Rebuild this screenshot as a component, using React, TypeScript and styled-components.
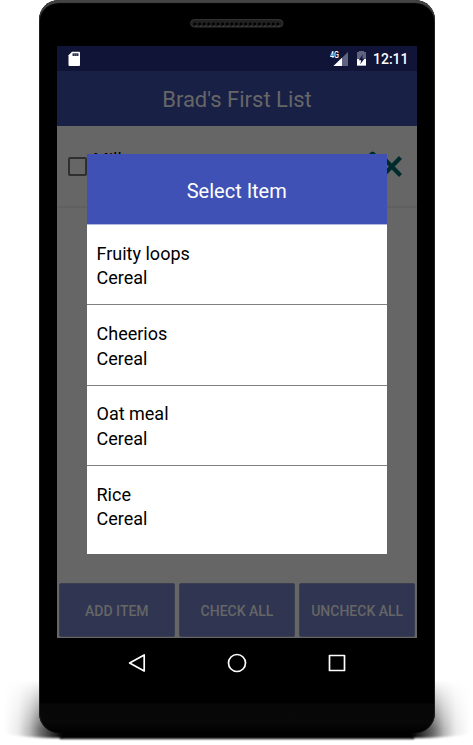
import React from "react";
import styled, { createGlobalStyle } from "styled-components";

const GlobalStyle = createGlobalStyle`
  * { box-sizing: border-box; }
  html, body { margin: 0; background: #fff; overflow: hidden; }
  body { font-family: Roboto, "Liberation Sans", sans-serif; }
`;

const Stage = styled.main`
  position: relative;
  width: 473px;
  height: 745px;
  overflow: hidden;
  padding-left: 38.5px;
`;

const GroundShadow = styled.svg`
  position: absolute;
  left: 0;
  top: 670px;
`;

const Phone = styled.div`
  position: relative;
  width: 396.5px;
  height: 733px;
  padding: 0 18px 0 18.5px;
  display: flex;
  flex-direction: column;
  background: linear-gradient(#000 0 703px, #070707 704px, #080808 722px, #000 733px);
  border-radius: 20px;
  box-shadow: inset 0 3px 1px #444, inset 1px 0 0 #1c1c1c, inset -1px 0 0 #1c1c1c;
`;

const Earpiece = styled.div`
  height: 46px;
  flex: none;
  display: flex;
  justify-content: center;
  padding-top: 19px;
`;

const Screen = styled.section`
  position: relative;
  height: 592px;
  flex: none;
  display: flex;
  flex-direction: column;
  background: #666;
`;

const StatusBar = styled.header`
  height: 25px;
  flex: none;
  display: flex;
  align-items: center;
  background: #101538;
  padding: 0 8px 0 11px;
  color: #fff;
`;

const StatusGroup = styled.div`
  margin-left: auto;
  display: flex;
  align-items: center;
`;

const Clock = styled.time`
  width: 36px;
  padding-top: 1px;
  font-size: 14px;
  font-weight: 500;
  line-height: 24px;
  white-space: nowrap;
`;

const TitleBar = styled.h1`
  height: 55px;
  flex: none;
  margin: 0;
  padding-top: 1px;
  display: flex;
  align-items: center;
  justify-content: center;
  background: #192046;
  color: #666;
  font-size: 22px;
  font-weight: 400;
`;

const ListRow = styled.div`
  height: 82px;
  flex: none;
  display: flex;
  padding: 0 14px 0 11px;
  border-bottom: 2px solid #606060;
`;

const RowName = styled.span`
  font-size: 18px;
  line-height: 20px;
  margin: 24px 0 0 6px;
  color: #000;
`;

const RowIcons = styled.svg`
  margin: 23px 0 0 auto;
`;

const Checkbox = styled.span`
  width: 19px;
  height: 19px;
  margin-top: 31px;
  border: 2px solid #2f2f2f;
  border-radius: 2px;
`;

const ButtonBar = styled.footer`
  margin-top: auto;
  padding: 0 1.5px 1px;
  display: grid;
  grid-template-columns: repeat(3, 1fr);
  gap: 3.5px;
`;

const ActionButton = styled.button`
  height: 54px;
  padding: 1px 0 0;
  border: 1px solid #3b3e50;
  border-radius: 2px;
  background: #303552;
  color: #666;
  font: 500 14px Roboto, "Liberation Sans", sans-serif;
  white-space: nowrap;
`;

const Dialog = styled.section`
  position: absolute;
  left: 29.5px;
  top: 108px;
  width: 300.5px;
  height: 400px;
  background: #fff;
`;

const DialogTitle = styled.h2`
  height: 70px;
  margin: 0;
  padding-top: 3px;
  display: flex;
  align-items: center;
  justify-content: center;
  background: #3f51b5;
  color: #fff;
  font-size: 20px;
  font-weight: 400;
`;

const ChoiceList = styled.ul`
  margin: 0;
  padding: 0;
  border-top: 1px solid #b2b9e1;
  list-style: none;
`;

const Choice = styled.li`
  height: 80.3px;
  padding: 16.9px 10px 0;
  color: #000;
  font-size: 18px;
  line-height: 24.5px;

  &:not(:last-child) { border-bottom: 1px solid #808080; }
`;

const ChoiceLine = styled.div``;

const Navigation = styled.nav`
  height: 49px;
  display: flex;
  align-items: center;
  justify-content: center;
`;

const choices = ["Fruity loops", "Cheerios", "Oat meal", "Rice"];

export default function App() {
  return (
    <>
      <GlobalStyle />
      <Stage>
        <GroundShadow width="473" height="75" viewBox="0 0 473 75">
          <defs>
            <linearGradient id="sideShade">
              <stop stopColor="#000" stopOpacity="0" />
              <stop offset=".25" stopColor="#000" stopOpacity=".08" />
              <stop offset=".45" stopColor="#000" stopOpacity=".28" />
              <stop offset=".62" stopColor="#000" stopOpacity=".56" />
              <stop offset="1" stopColor="#000" />
            </linearGradient>
            <linearGradient id="fade" x2="0" y2="1">
              <stop stopColor="#000" />
              <stop offset=".75" stopColor="#fff" />
              <stop offset="1" stopColor="#fff" />
            </linearGradient>
            <mask id="fadeMask"><rect y="10" width="473" height="65" fill="url(#fade)" /></mask>
            <filter id="soft" x="-20%" y="-50%" width="140%" height="200%"><feGaussianBlur stdDeviation="1.2" /></filter>
          </defs>
          <g mask="url(#fadeMask)" filter="url(#soft)">
            <path d="M4 10H62V68Q22 68 4 63Z" fill="url(#sideShade)" />
            <path d="M4 10H62V68Q22 68 4 63Z" fill="url(#sideShade)" transform="translate(474 0) scale(-1 1)" />
          </g>
          <path d="M60 55H414V69H60Z" fill="#000" filter="url(#soft)" />
        </GroundShadow>
        <Phone>
          <Earpiece>
            <svg width="94" height="9" viewBox="0 0 94 9">
              <rect x=".6" y=".6" width="92.4" height="7.4" rx="3.7" fill="#202020" stroke="#353535" />
              <path d="M5 5H90" stroke="#000" strokeWidth="3" strokeLinecap="round" strokeDasharray="0 4.6" />
              <path d="M5 7H90" stroke="#444" strokeDasharray="2 2.6" />
            </svg>
          </Earpiece>
          <Screen>
            <StatusBar>
              <svg width="13" height="16" viewBox="0 0 13 16">
                <path d="M4 .8H11Q12 .8 12 1.8V14Q12 15 11 15H1.5Q.5 15 .5 14V4.3Z" fill="#fff" />
                <path d="M4.5 2.3H10.5V5H4.5Z" fill="#303650" />
                <path d="M6.5 2V5M8.5 2V5" stroke="#777b90" strokeWidth=".6" />
              </svg>
              <StatusGroup>
                <svg width="43" height="18" viewBox="0 0 43 18">
                  <text x="0" y="8" fill="#fff" fontSize="8.5" fontWeight="500" textLength="9" lengthAdjust="spacingAndGlyphs">4G</text>
                  <path d="M18 2V16H3.5Z" fill="#5f6380" />
                  <path d="M12 7.8V16H3.5Z" fill="#fff" />
                  <path d="M29 2V1H34V2H36V16H27V2Z" fill="#5f6380" />
                  <path d="M27 9H36V15.5H27Z" fill="#fff" />
                  <path d="M32.8 4.5L28.7 10.2H31.2L30.3 14.2L34.6 8.4H32.1Z" fill="#101538" />
                </svg>
                <Clock>12:11</Clock>
              </StatusGroup>
            </StatusBar>
            <TitleBar>Brad's First List</TitleBar>
            <ListRow>
              <Checkbox />
              <RowName>Milk</RowName>
              <RowIcons width="37" height="34" viewBox="0 0 37 34">
                <path d="M1 12L3 5Q6.5 0 10 5V12Z" fill="#002b2d" />
                <path d="M17 8.5L34.5 26.5M34.5 8.5L17 26.5" stroke="#002b2d" strokeWidth="4.2" />
              </RowIcons>
            </ListRow>
            <ButtonBar>
              <ActionButton>ADD ITEM</ActionButton>
              <ActionButton>CHECK ALL</ActionButton>
              <ActionButton>UNCHECK ALL</ActionButton>
            </ButtonBar>
            <Dialog role="dialog" aria-label="Select Item">
              <DialogTitle>Select Item</DialogTitle>
              <ChoiceList>
                {choices.map((name) => (
                  <Choice key={name}>
                    <ChoiceLine>{name}</ChoiceLine>
                    <ChoiceLine>Cereal</ChoiceLine>
                  </Choice>
                ))}
              </ChoiceList>
            </Dialog>
          </Screen>
          <Navigation>
            <svg width="220" height="24" viewBox="0 0 220 24" fill="none" stroke="#fff" strokeWidth="1.7" strokeLinejoin="round">
              <path d="M17.2 4V20L2.6 12Z" />
              <circle cx="110" cy="12" r="8.5" />
              <rect x="202.5" y="4.5" width="15" height="15" />
            </svg>
          </Navigation>
        </Phone>
      </Stage>
    </>
  );
}
